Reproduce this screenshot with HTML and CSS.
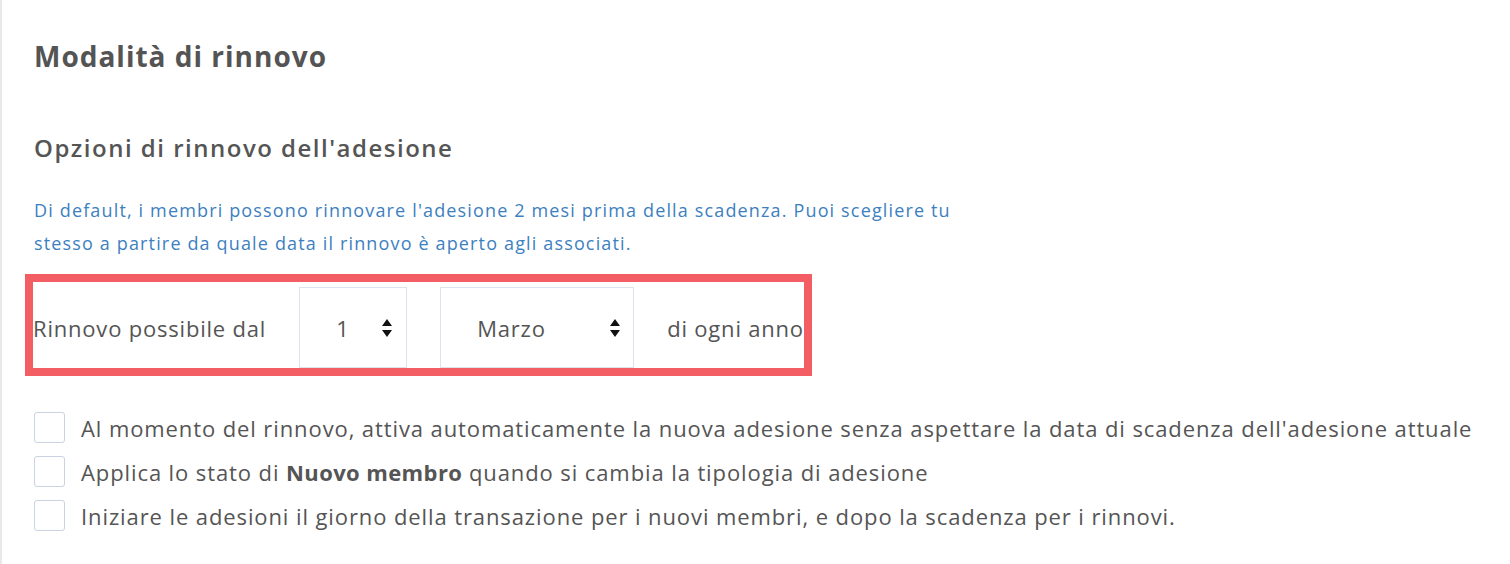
FILE: index.html
```html
<!DOCTYPE html>
<html lang="it">
<head>
    <meta charset="UTF-8">
    <meta name="viewport" content="width=device-width, initial-scale=1.0">
    <title>Modalità di rinnovo</title>
    <link rel="stylesheet" href="styles.css">
</head>
<body>
    <div class="page">
        <h1>Modalità di rinnovo</h1>
        <h2>Opzioni di rinnovo dell'adesione</h2>
        <p class="hint">Di default, i membri possono rinnovare l'adesione 2 mesi prima della scadenza. Puoi scegliere tu<br>stesso a partire da quale data il rinnovo è aperto agli associati.</p>

        <div class="renew-row">
            <span class="renew-label">Rinnovo possibile dal</span>
            <div class="fake-select day">
                <span>1</span>
                <svg class="arrows" width="10" height="18" viewBox="0 0 10 18"><path d="M5 0 L10 7 L0 7 Z M0 11 L10 11 L5 18 Z" fill="#111"/></svg>
            </div>
            <div class="fake-select month">
                <span>Marzo</span>
                <svg class="arrows" width="10" height="18" viewBox="0 0 10 18"><path d="M5 0 L10 7 L0 7 Z M0 11 L10 11 L5 18 Z" fill="#111"/></svg>
            </div>
            <span class="renew-label">di ogni anno</span>
        </div>

        <div class="options">
            <label class="option"><span class="box"></span>Al momento del rinnovo, attiva automaticamente la nuova adesione senza aspettare la data di scadenza dell'adesione attuale</label>
            <label class="option"><span class="box"></span><span>Applica lo stato di <b>Nuovo membro</b> quando si cambia la tipologia di adesione</span></label>
            <label class="option"><span class="box"></span>Iniziare le adesioni il giorno della transazione per i nuovi membri, e dopo la scadenza per i rinnovi.</label>
        </div>
    </div>
</body>
</html>
```

FILE: styles.css
```css
body {
    margin: 0;
    font-family: "Open Sans", "Noto Sans", Arial, sans-serif;
    color: #555;
    background: #fff;
}
.page {
    border-left: 2px solid #e8e8e8;
    padding: 36px 0 0 32px;
    min-height: 528px;
}
h1 {
    margin: 0;
    font-size: 28px;
    line-height: 40px;
    font-weight: 700;
    letter-spacing: 1px;
    color: #545454;
}
h2 {
    margin: 56px 0 0;
    font-size: 24px;
    line-height: 32px;
    font-weight: 600;
    letter-spacing: 1.5px;
    color: #555;
}
.hint {
    margin: 30px 0 0;
    font-size: 18px;
    line-height: 33px;
    letter-spacing: 1.15px;
    color: #3d7fc0;
}
.renew-row {
    display: inline-flex;
    align-items: center;
    gap: 33px;
    height: 86px;
    margin-top: 22px;
    margin-left: -1px;
    outline: 8px solid #f25e64;
}
.renew-label {
    font-size: 22px;
    letter-spacing: 0.8px;
    padding-top: 5px;
}
.fake-select {
    display: flex;
    align-items: center;
    justify-content: space-between;
    align-self: flex-end;
    height: 81px;
    box-sizing: border-box;
    border: 1px solid #dde3ec;
    font-size: 22px;
    letter-spacing: 0.8px;
    color: #555;
}
.fake-select.day {
    width: 108px;
    padding: 0 14px 0 36px;
}
.fake-select.month {
    width: 194px;
    padding: 0 13px 0 36px;
}
.options {
    margin-top: 44px;
}
.option {
    display: flex;
    align-items: center;
    gap: 16px;
    height: 31px;
    margin-bottom: 13px;
    font-size: 22px;
    letter-spacing: 0.9px;
}
.option b {
    font-weight: 700;
    letter-spacing: 0.4px;
}
.box {
    flex: none;
    width: 31px;
    height: 31px;
    box-sizing: border-box;
    border: 1px solid #c9d3e1;
    border-radius: 3px;
    background: #fff;
}
```
